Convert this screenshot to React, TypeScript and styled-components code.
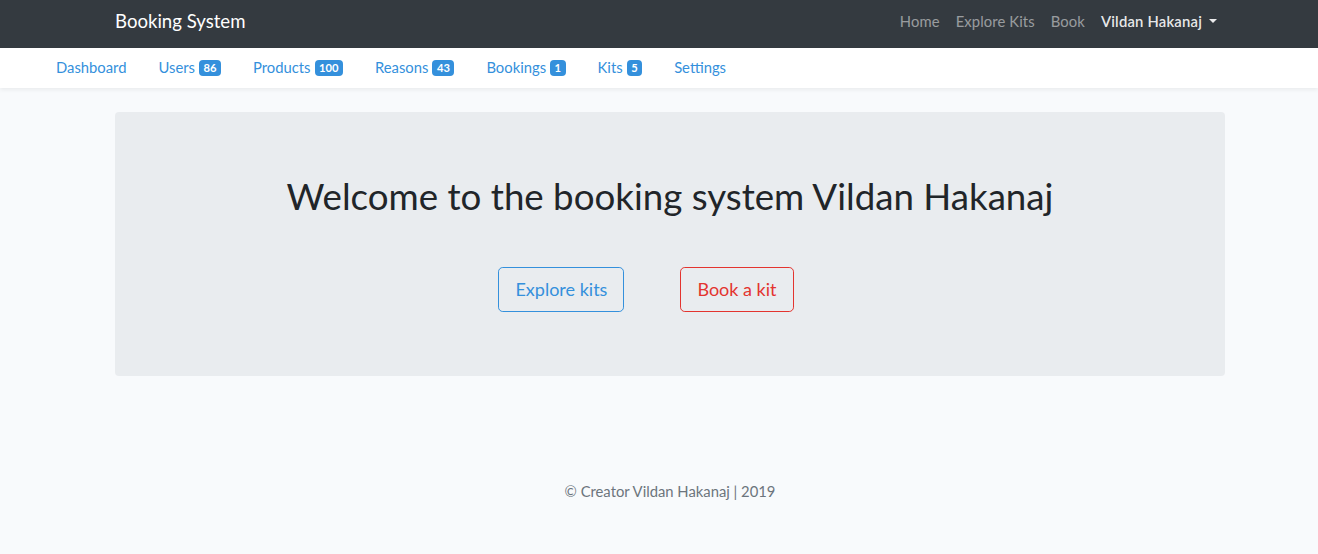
import React from "react";
import styled, { createGlobalStyle } from "styled-components";

const Global = createGlobalStyle`
  html, body { margin: 0; padding: 0; }
  body {
    background: #f8fafc;
    font-family: Lato, "Noto Sans", sans-serif;
    font-size: 14.8px;
    color: #212529;
  }
  * { box-sizing: border-box; }
`;

const TopBar = styled.nav`
  background: #343a40;
  height: 48px;
`;

const Container = styled.div`
  width: 1140px;
  margin-left: calc(50% - 559px);
  padding: 0 15px 6px;
  display: flex;
  align-items: center;
  height: 100%;
`;

const Brand = styled.a`
  color: #fff;
  font-size: 18.6px;
  margin-right: auto;
  text-decoration: none;
`;

const TopLink = styled.a<{ $active?: boolean }>`
  color: ${(p) => (p.$active ? "rgba(255,255,255,0.9)" : "rgba(255,255,255,0.5)")};
  font-weight: ${(p) => (p.$active ? 600 : 400)};
  letter-spacing: ${(p) => (p.$active ? "0.2px" : "0.1px")};
  padding: 8px;
  text-decoration: none;
  display: flex;
  align-items: center;
`;

const Caret = styled.span`
  display: inline-block;
  margin-left: 7px;
  border-top: 4.5px solid rgba(255,255,255,0.9);
  border-left: 4px solid transparent;
  border-right: 4px solid transparent;
`;

const SubBar = styled.nav`
  background: #fff;
  height: 40px;
  box-shadow: 0 2px 4px rgba(0, 0, 0, 0.06);
  display: flex;
  align-items: center;
  padding-left: 40px;
  padding-bottom: 2px;
`;

const SubLink = styled.a`
  color: #3490dc;
  padding: 8px 16px;
  text-decoration: none;
  display: flex;
  align-items: center;
`;

const Badge = styled.span`
  display: inline-block;
  background: #3490dc;
  color: #fff;
  font-size: 11.2px;
  font-weight: 700;
  line-height: 1;
  padding: 2px 4.5px 2px;
  border-radius: 4px;
  margin-left: 4px;
  position: relative;
  top: 1px;
`;

const Main = styled.main`
  padding-top: 24px;
`;

const Jumbotron = styled.section`
  width: 1110px;
  margin-left: calc(50% - 544px);
  background: #e9ecef;
  border-radius: 4px;
  height: 264px;
  display: flex;
  flex-direction: column;
  align-items: center;
  padding-top: 62px;
`;

const Title = styled.h1`
  margin: 0;
  font-weight: 400;
  font-size: 36.7px;
  line-height: 1.2;
  color: #212529;
`;

const Buttons = styled.div`
  display: flex;
  gap: 56px;
  margin-top: 49px;
  margin-right: 48px;
`;

const Button = styled.a<{ $color: string }>`
  color: ${(p) => p.$color};
  border: 1px solid ${(p) => p.$color};
  border-radius: 4.8px;
  font-size: 18px;
  line-height: 27px;
  padding: 8px 16px;
  text-decoration: none;
`;

const Footer = styled.footer`
  text-align: center;
  color: #6c757d;
  margin-top: 104px;
  margin-left: 22px;
  line-height: 22px;
`;

export default function App() {
  return (
    <>
      <Global />
      <TopBar>
        <Container>
          <Brand>Booking System</Brand>
          <TopLink>Home</TopLink>
          <TopLink>Explore Kits</TopLink>
          <TopLink>Book</TopLink>
          <TopLink $active>
            Vildan Hakanaj<Caret />
          </TopLink>
        </Container>
      </TopBar>
      <SubBar>
        <SubLink>Dashboard</SubLink>
        <SubLink>Users<Badge>86</Badge></SubLink>
        <SubLink>Products<Badge>100</Badge></SubLink>
        <SubLink>Reasons<Badge>43</Badge></SubLink>
        <SubLink>Bookings<Badge>1</Badge></SubLink>
        <SubLink>Kits<Badge>5</Badge></SubLink>
        <SubLink>Settings</SubLink>
      </SubBar>
      <Main>
        <Jumbotron>
          <Title>Welcome to the booking system Vildan Hakanaj</Title>
          <Buttons>
            <Button $color="#3490dc">Explore kits</Button>
            <Button $color="#e3342f">Book a kit</Button>
          </Buttons>
        </Jumbotron>
        <Footer>© Creator Vildan Hakanaj | 2019</Footer>
      </Main>
    </>
  );
}
